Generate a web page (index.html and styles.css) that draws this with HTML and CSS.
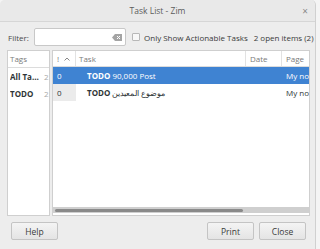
FILE: index.html
```html
<!DOCTYPE html>
<html lang="en">

<head>
    <title>Task List - Zim</title>
    <meta charset="UTF-8">
    <link rel="stylesheet" href="styles.css">
</head>

<body>
    <div class="window">
        <div class="titlebar">
            <span class="title">Task List - Zim</span>
            <span class="close">&#215;</span>
        </div>

        <div class="filter-row">
            <label class="filter-label">Filter:</label>
            <div class="entry">
                <svg class="clear" width="10" height="7" viewBox="0 0 10 7">
                    <path d="M3 0H10V7H3L0 3.5Z" fill="#a4a4a4"/>
                    <path d="M5 2L8 5M8 2L5 5" stroke="#fff" stroke-width="1"/>
                </svg>
            </div>
            <span class="check"></span>
            <span class="check-label">Only Show Actionable Tasks</span>
            <span class="count">2 open items (2)</span>
        </div>

        <div class="panes">
            <div class="tags">
                <div class="tags-head">Tags</div>
                <div class="tag-row"><b>All Ta…</b><span class="num">2</span></div>
                <div class="tag-row"><b>TODO</b><span class="num">2</span></div>
            </div>

            <div class="tasks">
                <div class="row head">
                    <div class="c-prio">! <svg class="sort" width="6" height="4" viewBox="0 0 6 4"><path d="M0.5 3.5L3 1L5.5 3.5" fill="none" stroke="#888" stroke-width="1"/></svg></div>
                    <div class="c-task">Task</div>
                    <div class="c-date">Date</div>
                    <div class="c-page">Page</div>
                </div>
                <div class="row selected">
                    <div class="c-prio">0</div>
                    <div class="c-task"><b>TODO</b> 90,000 Post</div>
                    <div class="c-date"></div>
                    <div class="c-page">My no</div>
                </div>
                <div class="row">
                    <div class="c-prio sorted">0</div>
                    <div class="c-task"><b>TODO</b> <span dir="rtl">موضوع المعيدين</span></div>
                    <div class="c-date"></div>
                    <div class="c-page">My no</div>
                </div>
                <div class="spacer"></div>
                <div class="hscroll"><div class="thumb"></div></div>
            </div>
        </div>

        <div class="buttons">
            <button class="btn">Help</button>
            <div class="grow"></div>
            <button class="btn">Print</button>
            <button class="btn">Close</button>
        </div>
    </div>
</body>

</html>
```

FILE: styles.css
```css
body {
    margin: 0;
    background: #f4f4f4;
    font-family: "Open Sans", "Noto Sans", sans-serif;
    font-size: 8px;
    color: #2e3436;
}

.window {
    width: 315px;
    height: 249px;
    background: #ededed;
    border-right: 1px solid #d0d0d0;
    border-radius: 5px 5px 0 0;
    display: flex;
    flex-direction: column;
    white-space: nowrap;
}

.titlebar {
    height: 21px;
    border-bottom: 1px solid #d6d6d6;
    background: #e9e9e9;
    border-radius: 5px 5px 0 0;
    display: flex;
    align-items: center;
    justify-content: center;
    position: relative;
}

.title {
    color: #5c5c5c;
    font-size: 8.5px;
}

.close {
    position: absolute;
    right: 7px;
    top: 4px;
    color: #8a8a8a;
    font-size: 10px;
}

.filter-row {
    display: flex;
    align-items: center;
    height: 18px;
    margin-top: 6px;
    padding-left: 8px;
}

.filter-row > * {
    flex-shrink: 0;
}

.filter-label {
    color: #4a4a4a;
    width: 26px;
}

.entry {
    width: 87px;
    height: 16px;
    background: #fff;
    border: 1px solid #c8c8c8;
    border-radius: 2px;
    display: flex;
    align-items: center;
    justify-content: flex-end;
    padding-right: 3px;
}

.check {
    width: 6px;
    height: 6px;
    border: 1px solid #b8b8b8;
    border-radius: 1px;
    background: #f8f8f8;
    margin-left: 6px;
}

.check-label {
    margin-left: 4px;
    color: #3a3a3a;
}

.count {
    margin-left: 6px;
    color: #3a3a3a;
}

.panes {
    display: flex;
    margin-top: 4px;
    padding-left: 7px;
    height: 166px;
}

.tags {
    width: 41px;
    background: #fff;
    border: 1px solid #cfcfcf;
}

.tags-head {
    height: 16px;
    line-height: 16px;
    padding-left: 2px;
    color: #7a7a7a;
    border-bottom: 1px solid #dcdcdc;
}

.tag-row {
    height: 17px;
    line-height: 17px;
    padding-left: 2px;
    display: flex;
}

.tag-row b {
    width: 34px;
    overflow: hidden;
}

.num {
    color: #a8a8a8;
}

.tasks {
    margin-left: 2px;
    width: 256px;
    height: 164px;
    background: #fff;
    border: 1px solid #cfcfcf;
    display: flex;
    flex-direction: column;
    overflow: hidden;
}

.row {
    display: flex;
    height: 17px;
    line-height: 17px;
}

.row > div {
    flex-shrink: 0;
    box-sizing: border-box;
    overflow: hidden;
}

.row.head {
    height: 15px;
    line-height: 15px;
    color: #7a7a7a;
    border-bottom: 1px solid #dcdcdc;
}

.row.head > div {
    border-right: 1px solid #e2e2e2;
}

.row.head > div:last-child {
    border-right: none;
}

.c-prio {
    width: 23px;
    padding-left: 4px;
    display: flex;
    align-items: center;
    gap: 5px;
}

.c-task {
    width: 170px;
    padding-left: 11px;
}

.row.head .c-task {
    padding-left: 3px;
}

.c-date {
    width: 36px;
    padding-left: 4px;
}

.c-page {
    width: 30px;
    padding-left: 4px;
}

.sorted {
    background: #ebebeb;
}

.selected {
    background: #3f83d2;
    color: #fff;
}

.spacer {
    flex: 1;
}

.hscroll {
    height: 6px;
    margin-bottom: 2px;
    background: #cfcfcf;
    display: flex;
    align-items: center;
    padding-left: 2px;
}

.thumb {
    width: 188px;
    height: 3px;
    border-radius: 2px;
    background: #8a8a8a;
}

.buttons {
    display: flex;
    gap: 5px;
    margin-top: 6px;
    padding: 0 9px 0 11px;
}

.grow {
    flex: 1;
}

.btn {
    width: 47px;
    height: 18px;
    font-family: inherit;
    font-size: 8.5px;
    color: #3a3a3a;
    background: linear-gradient(#f4f4f4, #e4e4e4);
    border: 1px solid #c4c4c4;
    border-radius: 2px;
    padding: 0;
}
```
